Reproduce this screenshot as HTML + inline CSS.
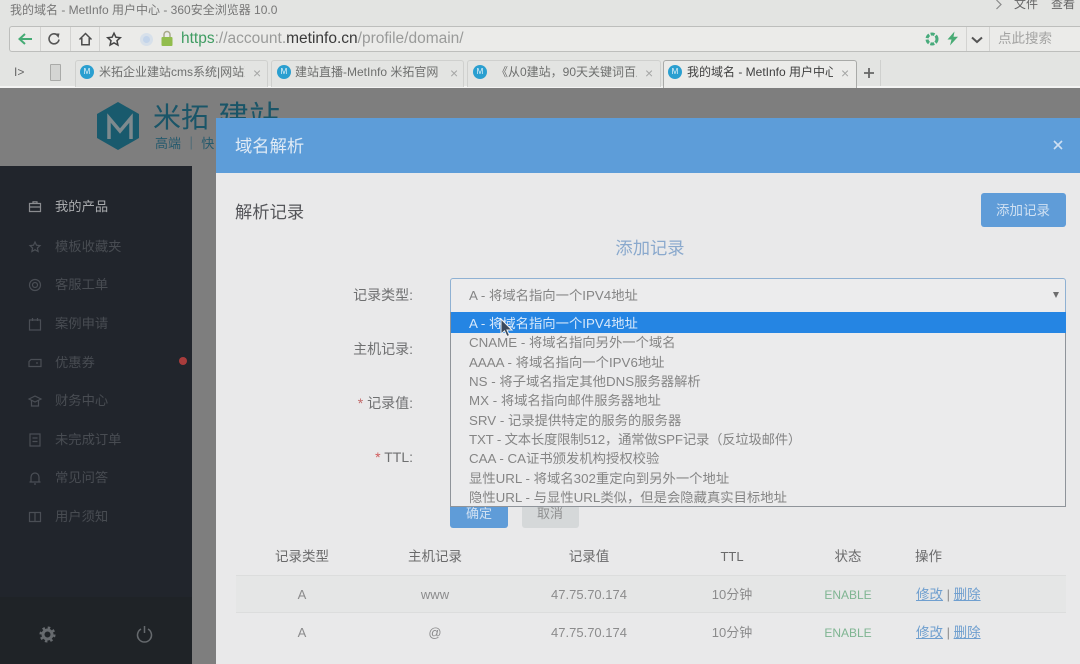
<!DOCTYPE html>
<html lang="zh-CN">
<head>
<meta charset="utf-8">
<title>我的域名 - MetInfo 用户中心</title>
<style>
html,body{margin:0;padding:0;width:1080px;height:664px;overflow:hidden;background:#7e7e7e}
body{position:relative;font-family:"Liberation Sans","Noto Sans CJK SC",sans-serif}
#w{position:absolute;left:0;top:0;width:1080px;height:664px;overflow:hidden;filter:blur(.35px)}
.b{position:absolute;box-sizing:border-box}
.t{position:absolute;white-space:nowrap;line-height:20px;height:20px}
.c{transform:translateX(-50%)}
.r{transform:translateX(-100%)}
.tab{position:absolute;top:60px;height:27px;box-sizing:border-box;background:#e3e4e2;border:1px solid #cfd0ce;border-bottom:0;border-radius:3px 3px 0 0}
.fav{position:absolute;width:14px;height:14px;border-radius:50%;background:#2a9fd0;color:#e8f4fa;font-size:8px;line-height:14px;text-align:center;top:65px}
.tt{font-size:12px;top:62px;color:#6e6f6e;overflow:hidden}
.x{font-size:14px;top:63px;color:#a5a6a5}
.m{font-size:13.300px;left:55px;color:#484c52}
.o{font-size:13.330px;color:#858585;left:469px}
.l{font-size:14px;color:#6f7071}
.th{font-size:13.500px;color:#6a6a6b;top:547px}
.td{font-size:13px;color:#8b8b8c}
.lk{color:#6f9fcf;text-decoration:underline;font-size:13.500px}
.en{font-size:12px;color:#7fb592}
svg{position:absolute;overflow:visible}
.ic{fill:none;stroke:#4a4e55;stroke-width:1.200}
</style>
</head>
<body>
<div id="w">
<!-- Browser chrome -->
<div class="b" style="left:0;top:0;width:1080px;height:87px;background:#e3e4e2"></div>
<div class="b" style="left:0;top:86px;width:1080px;height:2px;background:#f4f4f3"></div>
<div class="t" style="left:10px;top:0;font-size:12px;color:#777">我的域名 - MetInfo 用户中心 - 360安全浏览器 10.0</div>
<svg style="left:995px;top:0" width="8" height="10" viewBox="0 0 8 10"><path d="M1.500 0L6 4.500L1.500 9" fill="none" stroke="#8a8a8a" stroke-width="1.200"/></svg>
<div class="t" style="left:1014px;top:-6px;font-size:12px;color:#666">文件</div>
<div class="t" style="left:1051px;top:-6px;font-size:12px;color:#666">查看</div>

<!-- Address bar -->
<div class="b" style="left:9px;top:26px;width:1071px;height:26px;background:#ebebe9;border:1px solid #bdbebc;border-right:0;border-radius:3px 0 0 3px"></div>
<div class="b" style="left:40px;top:27px;width:1px;height:24px;background:#d3d3d1"></div>
<div class="b" style="left:70px;top:27px;width:1px;height:24px;background:#d3d3d1"></div>
<div class="b" style="left:99px;top:27px;width:1px;height:24px;background:#d3d3d1"></div>
<div class="b" style="left:966px;top:27px;width:1px;height:24px;background:#d3d3d1"></div>
<div class="b" style="left:989px;top:27px;width:1px;height:24px;background:#d3d3d1"></div>
<svg style="left:17px;top:32px" width="16" height="14" viewBox="0 0 16 14"><path d="M15 7H3M8 2L2.500 7L8 12" fill="none" stroke="#45ab74" stroke-width="2"/></svg>
<svg style="left:47px;top:32px" width="14" height="14" viewBox="0 0 14 14"><path d="M10.800 3.500A5 5 0 1 0 12 7.500" fill="none" stroke="#555" stroke-width="1.600"/><path d="M8 1.500L12.500 1.500L11.500 6Z" fill="#555"/></svg>
<svg style="left:78px;top:32px" width="15" height="14" viewBox="0 0 15 14"><path d="M1.500 7.500L7.500 1.500L13.500 7.500M3.800 6V12.800H11.200V6" fill="none" stroke="#4c4c4c" stroke-width="1.500"/></svg>
<svg style="left:106px;top:32px" width="16" height="14" viewBox="0 0 16 14"><path d="M8 1.200L9.900 5.200L14.300 5.700L11 8.700L11.900 13L8 10.800L4.100 13L5 8.700L1.700 5.700L6.100 5.200Z" fill="none" stroke="#444" stroke-width="1.500"/></svg>
<div class="b" style="left:140px;top:33px;width:13px;height:13px;border-radius:50%;background:#c3d4ea;border:3px solid #d7e0ea"></div>
<svg style="left:160px;top:30px" width="14" height="17" viewBox="0 0 14 17"><path d="M4 7V4.500A3 3 0 0 1 10 4.500V7" fill="none" stroke="#a9a98c" stroke-width="1.500"/><rect x="1.500" y="7" width="11" height="9" rx="1" fill="#92bd4d"/></svg>
<div class="t" style="left:181px;top:28px;font-size:15.500px;height:22px;line-height:22px;color:#9a9b9a"><span style="color:#3f9c62">https</span>://account.<span style="color:#3a3a3a">metinfo.cn</span>/profile/domain/</div>
<svg style="left:925px;top:32px" width="14" height="14" viewBox="0 0 14 14"><circle cx="7" cy="7" r="5" fill="none" stroke="#48ab7c" stroke-width="3" stroke-dasharray="4 1.500"/></svg>
<svg style="left:946px;top:31px" width="13" height="15" viewBox="0 0 13 15"><path d="M8.500 .500L1.500 8.500H5.500L4 14.500L12 5.800H7.500Z" fill="#48ab74"/></svg>
<svg style="left:971px;top:36px" width="12" height="8" viewBox="0 0 12 8"><path d="M1 1.500L6 6L11 1.500" fill="none" stroke="#555" stroke-width="2"/></svg>
<div class="t" style="left:998px;top:29px;font-size:13.500px;color:#a3a3a2">点此搜索</div>

<!-- Tab strip -->
<div class="t" style="left:14px;top:62px;font-size:12px;color:#666">I&gt;</div>
<div class="b" style="left:50px;top:64px;width:11px;height:17px;background:#d4d5d3;border:1px solid #a9aaa8;border-radius:1px"></div>

<div class="tab" style="left:75px;width:193px"></div>
<div class="fav" style="left:80px">M</div>
<div class="t tt" style="left:99px;width:146px">米拓企业建站cms系统|网站建设</div>
<div class="t x" style="left:253px">×</div>

<div class="tab" style="left:271px;width:193px"></div>
<div class="fav" style="left:277px">M</div>
<div class="t tt" style="left:295px;width:146px">建站直播-MetInfo 米拓官网</div>
<div class="t x" style="left:450px">×</div>

<div class="tab" style="left:467px;width:194px"></div>
<div class="fav" style="left:473px">M</div>
<div class="t tt" style="left:496px;width:141px">《从0建站，90天关键词百度</div>
<div class="t x" style="left:645px">×</div>

<div class="tab" style="left:663px;width:194px;background:#ebebe9;border-color:#a9aaa8;height:28px"></div>
<div class="fav" style="left:668px">M</div>
<div class="t tt" style="left:687px;width:146px;color:#3f3f3f">我的域名 - MetInfo 用户中心</div>
<div class="t x" style="left:841px">×</div>
<svg style="left:863px;top:67px" width="12" height="12" viewBox="0 0 12 12"><path d="M6 1V11M1 6H11" stroke="#666" stroke-width="1.800" fill="none"/></svg>
<div class="b" style="left:880px;top:60px;width:1px;height:26px;background:#cfd0ce"></div>

<!-- Page behind overlay -->
<div class="b" style="left:0;top:88px;width:1080px;height:576px;background:#7e7e7e"></div>
<svg style="left:95px;top:101px" width="46" height="50" viewBox="0 0 46 50"><path d="M23 1L44 13V37L23 49L2 37V13Z" fill="#195a6d"/><path d="M14 38V17L25 30L36 17V38" fill="none" stroke="#7e8a8e" stroke-width="3.500"/></svg>
<div class="t" style="left:153px;top:98px;font-size:28px;height:40px;line-height:40px;color:#1a5568">米拓</div>
<div class="t" style="left:218px;top:98px;font-size:31px;height:40px;line-height:40px;color:#1a5568">建站</div>
<div class="t" style="left:155px;top:134px;font-size:13px;color:#265a6d">高端 ｜ 快</div>

<!-- Sidebar -->
<div class="b" style="left:0;top:166px;width:192px;height:498px;background:#21252c"></div>
<div class="b" style="left:0;top:597px;width:192px;height:67px;background:#1f2327"></div>

<svg style="left:28px;top:200px" width="14" height="14" viewBox="0 0 14 14"><path class="ic" style="stroke:#8a8c90" d="M1.500 3.500H12.500V11.500H1.500ZM5 3.500V1.800H9V3.500M1.500 7H12.500"/></svg>
<div class="t m" style="top:197px;color:#a9abae">我的产品</div>
<svg style="left:28px;top:240px" width="14" height="14" viewBox="0 0 14 14"><path class="ic" d="M7 2L8.500 5.200L12 5.600L9.400 8L10.100 11.500L7 9.700L3.900 11.500L4.600 8L2 5.600L5.500 5.200Z"/></svg>
<div class="t m" style="top:237px">模板收藏夹</div>
<svg style="left:28px;top:278px" width="14" height="14" viewBox="0 0 14 14"><circle class="ic" cx="7" cy="7" r="5.500"/><circle class="ic" cx="7" cy="7" r="2.500"/></svg>
<div class="t m" style="top:275px">客服工单</div>
<svg style="left:28px;top:317px" width="14" height="14" viewBox="0 0 14 14"><path class="ic" d="M1.500 3H12.500V13H1.500ZM4.500 1V4M9.500 1V4"/></svg>
<div class="t m" style="top:314px">案例申请</div>
<svg style="left:28px;top:356px" width="14" height="14" viewBox="0 0 14 14"><path class="ic" d="M3 3.500H13V10.500H1V5.500ZM9 6V8"/></svg>
<div class="t m" style="top:353px">优惠券</div>
<div class="b" style="left:179px;top:357px;width:8px;height:8px;border-radius:50%;background:#a83c3c"></div>
<svg style="left:28px;top:394px" width="14" height="14" viewBox="0 0 14 14"><path class="ic" d="M1 5L7 2L13 5L7 8ZM3.500 6.500V12H10.500V6.500"/></svg>
<div class="t m" style="top:391px">财务中心</div>
<svg style="left:28px;top:433px" width="14" height="14" viewBox="0 0 14 14"><path class="ic" d="M2 1H12V13H2ZM4.500 5H9.500M4.500 8.500H9.500"/></svg>
<div class="t m" style="top:430px">未完成订单</div>
<svg style="left:28px;top:471px" width="14" height="14" viewBox="0 0 14 14"><path class="ic" d="M3 11V6A4 4 0 0 1 11 6V11ZM1.500 11H12.500M6 13H8"/></svg>
<div class="t m" style="top:468px">常见问答</div>
<svg style="left:28px;top:510px" width="14" height="14" viewBox="0 0 14 14"><path class="ic" d="M1.500 2.500H12.500V11.500H1.500ZM7 2.500V11.500"/></svg>
<div class="t m" style="top:507px">用户须知</div>

<svg style="left:39px;top:626px" width="17" height="17" viewBox="0 0 17 17"><circle cx="8.500" cy="8.500" r="4.500" fill="none" stroke="#666a6e" stroke-width="3"/><circle cx="8.500" cy="8.500" r="6.800" fill="none" stroke="#666a6e" stroke-width="2.500" stroke-dasharray="2.500 2.840"/></svg>
<svg style="left:136px;top:625px" width="17" height="18" viewBox="0 0 17 18"><path d="M5 4A7 7 0 1 0 12 4M8.500 1V8" fill="none" stroke="#666a6e" stroke-width="1.500"/></svg>

<!-- Modal -->
<div class="b" style="left:216px;top:118px;width:864px;height:546px;background:#e9e9ea"></div>
<div class="b" style="left:216px;top:118px;width:864px;height:55px;background:#5d9dd9"></div>
<div class="t" style="left:235px;top:136px;font-size:17.300px;color:#dfeaf5">域名解析</div>
<svg style="left:1053px;top:140px" width="10" height="10" viewBox="0 0 10 10"><path d="M1 1L9 9M9 1L1 9" stroke="#cfe0f2" stroke-width="1.600" fill="none"/></svg>

<div class="t" style="left:235px;top:202px;font-size:17.300px;color:#55565a">解析记录</div>
<div class="b" style="left:981px;top:193px;width:85px;height:34px;background:#5f9cd8;border-radius:3px"></div>
<div class="t c" style="left:1023px;top:201px;font-size:13.500px;color:#cfe0f2">添加记录</div>
<div class="t c" style="left:650px;top:238px;font-size:17.300px;color:#8aa9cd">添加记录</div>

<!-- Form labels -->
<div class="t l r" style="left:413px;top:285px">记录类型:</div>
<div class="t l r" style="left:413px;top:339px">主机记录:</div>
<div class="t l r" style="left:413px;top:393px"><span style="color:#c26a6a">* </span>记录值:</div>
<div class="t l r" style="left:413px;top:447px"><span style="color:#d05a5a">* </span>TTL:</div>

<!-- Select -->
<div class="b" style="left:450px;top:278px;width:616px;height:35px;background:#ececed;border:1px solid #8fb1d3;border-radius:3px 3px 0 0"></div>
<div class="t o" style="top:286px">A - 将域名指向一个IPV4地址</div>
<svg style="left:1053px;top:292px" width="6" height="6" viewBox="0 0 6 6"><path d="M0 0H6L3 6Z" fill="#6d6d6e"/></svg>

<!-- Buttons beneath dropdown -->
<div class="b" style="left:450px;top:500px;width:58px;height:28px;background:#5f9cd8;border-radius:3px"></div>
<div class="t c" style="left:479px;top:504px;font-size:13px;color:#cfe0f2">确定</div>
<div class="b" style="left:522px;top:500px;width:57px;height:28px;background:#d5d8d9;border-radius:3px"></div>
<div class="t c" style="left:550px;top:504px;font-size:13px;color:#8e8f90">取消</div>

<!-- Dropdown -->
<div class="b" style="left:450px;top:312px;width:616px;height:195px;background:#ebebec;border:1px solid #8f949a;border-top:0"></div>
<div class="b" style="left:451px;top:312px;width:615px;height:21px;background:#2585e3"></div>
<div class="t o" style="top:314px;color:#d7e8fa">A - 将域名指向一个IPV4地址</div>
<div class="t o" style="top:333px">CNAME - 将域名指向另外一个域名</div>
<div class="t o" style="top:353px">AAAA - 将域名指向一个IPV6地址</div>
<div class="t o" style="top:372px">NS - 将子域名指定其他DNS服务器解析</div>
<div class="t o" style="top:391px">MX - 将域名指向邮件服务器地址</div>
<div class="t o" style="top:411px">SRV - 记录提供特定的服务的服务器</div>
<div class="t o" style="top:430px;letter-spacing:-.2px">TXT - 文本长度限制512，通常做SPF记录（反垃圾邮件）</div>
<div class="t o" style="top:449px">CAA - CA证书颁发机构授权校验</div>
<div class="t o" style="top:469px">显性URL - 将域名302重定向到另外一个地址</div>
<div class="t o" style="top:488px">隐性URL - 与显性URL类似，但是会隐藏真实目标地址</div>
<svg style="left:500px;top:318px" width="13" height="20" viewBox="0 0 13 20"><path d="M1 1V16L4.500 12.800L7 18.500L9.500 17.400L7 12H12Z" fill="#3b4a5c" stroke="#f2f2f2" stroke-width="1"/></svg>

<!-- Table -->
<div class="t th c" style="left:302px">记录类型</div>
<div class="t th c" style="left:435px">主机记录</div>
<div class="t th c" style="left:589px">记录值</div>
<div class="t th c" style="left:732px;font-size:13px">TTL</div>
<div class="t th c" style="left:848px">状态</div>
<div class="t th" style="left:915px">操作</div>
<div class="b" style="left:236px;top:575px;width:830px;height:38px;background:#e5e6e6;border-top:1px solid #dcdddd;border-bottom:1px solid #dcdddd"></div>

<div class="t td c" style="left:302px;top:585px">A</div>
<div class="t td c" style="left:435px;top:585px">www</div>
<div class="t td c" style="left:589px;top:585px">47.75.70.174</div>
<div class="t td c" style="left:732px;top:585px">10分钟</div>
<div class="t td c en" style="left:848px;top:585px;color:#7fb592">ENABLE</div>
<div class="t td" style="left:916px;top:585px"><span class="lk">修改</span> | <span class="lk">删除</span></div>

<div class="t td c" style="left:302px;top:623px">A</div>
<div class="t td c" style="left:435px;top:623px">@</div>
<div class="t td c" style="left:589px;top:623px">47.75.70.174</div>
<div class="t td c" style="left:732px;top:623px">10分钟</div>
<div class="t td c en" style="left:848px;top:623px;color:#7fb592">ENABLE</div>
<div class="t td" style="left:916px;top:623px"><span class="lk">修改</span> | <span class="lk">删除</span></div>
</div>
</body>
</html>
